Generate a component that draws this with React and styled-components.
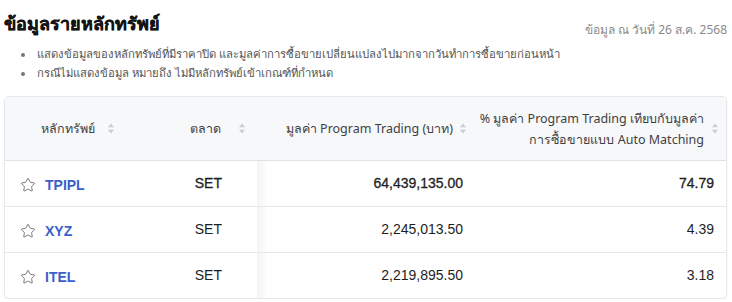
import React from "react";
import styled, { createGlobalStyle } from "styled-components";
import { Star } from "lucide-react";

const GlobalStyle = createGlobalStyle`
  body {
    margin: 0;
    background: #ffffff;
    font-family: "Noto Sans", "Liberation Sans", sans-serif;
    color: #222;
  }
`;

const rows = [
  { symbol: "TPIPL", market: "SET", value: "64,439,135.00", pct: "74.79", bold: true },
  { symbol: "XYZ", market: "SET", value: "2,245,013.50", pct: "4.39" },
  { symbol: "ITEL", market: "SET", value: "2,219,895.50", pct: "3.18" },
];

function SortIcon() {
  return (
    <svg width="6" height="11" viewBox="0 0 6 11">
      <path d="M0 4.3 L3 0.5 L6 4.3 Z" fill="#c9ccd1" />
      <path d="M0 6.7 L3 10.5 L6 6.7 Z" fill="#c9ccd1" />
    </svg>
  );
}

export default function App() {
  return (
    <Page>
      <GlobalStyle />
      <TopBar>
        <Title>ข้อมูลรายหลักทรัพย์</Title>
        <AsOf>ข้อมูล ณ วันที่ 26 ส.ค. 2568</AsOf>
      </TopBar>
      <Notes>
        <li>แสดงข้อมูลของหลักทรัพย์ที่มีราคาปิด และมูลค่าการซื้อขายเปลี่ยนแปลงไปมากจากวันทำการซื้อขายก่อนหน้า</li>
        <li>กรณีไม่แสดงข้อมูล หมายถึง ไม่มีหลักทรัพย์เข้าเกณฑ์ที่กำหนด</li>
      </Notes>
      <TableCard>
        <Table>
          <colgroup>
            <col style={{ width: 120 }} />
            <col style={{ width: 132 }} />
            <col style={{ width: 218 }} />
            <col />
          </colgroup>
          <thead>
            <tr>
              <Th $padLeft={36}>
                <HeadInner $justify="flex-start" $gap={13}>
                  หลักทรัพย์ <SortIcon />
                </HeadInner>
              </Th>
              <Th $sticky $padRight={12}>
                <HeadInner $justify="flex-end" $gap={18}>
                  ตลาด <SortIcon />
                </HeadInner>
              </Th>
              <Th $padRight={9}>
                <HeadInner $justify="flex-end" $gap={7}>
                  มูลค่า Program Trading (บาท) <SortIcon />
                </HeadInner>
              </Th>
              <Th $padRight={8}>
                <HeadInner $justify="flex-end" $gap={8}>
                  <HeadText>
                    % มูลค่า Program Trading เทียบกับมูลค่า
                    <br />
                    การซื้อขายแบบ Auto Matching
                  </HeadText>
                  <SortIcon />
                </HeadInner>
              </Th>
            </tr>
          </thead>
          <tbody>
            {rows.map((r) => (
              <tr key={r.symbol}>
                <Td $padLeft={15}>
                  <SymbolCell>
                    <Star size={16} strokeWidth={1.2} color="#5a5a5a" />
                    <SymbolLink>{r.symbol}</SymbolLink>
                  </SymbolCell>
                </Td>
                <Td $sticky $align="right" $padRight={35} $bold={r.bold}>
                  {r.market}
                </Td>
                <Td $align="right" $padRight={12} $bold={r.bold}>
                  {r.value}
                </Td>
                <Td $align="right" $padRight={12} $bold={r.bold}>
                  {r.pct}
                </Td>
              </tr>
            ))}
          </tbody>
        </Table>
      </TableCard>
    </Page>
  );
}

const Page = styled.div`
  padding: 10px 5px 0 4px;
`;

const TopBar = styled.div`
  display: flex;
  justify-content: space-between;
  align-items: flex-end;
`;

const Title = styled.h1`
  margin: 0;
  font-size: 18px;
  font-weight: 700;
  color: #141414;
  line-height: 26px;
  -webkit-text-stroke: 0.3px currentColor;
`;

const AsOf = styled.span`
  font-size: 12px;
  color: #8a8a8a;
  line-height: 18px;
  position: relative;
  top: 3px;
`;

const Notes = styled.ul`
  margin: 8px 0 0;
  padding-left: 31px;
  font-size: 11.3px;
  line-height: 19px;
  color: #555;
  li {
    padding-left: 2px;
  }
  li::marker {
    color: #777;
    font-size: 10px;
  }
`;

const TableCard = styled.div`
  margin-top: 14px;
  border: 1px solid #e4e7eb;
  border-radius: 5px;
  overflow: hidden;
  box-shadow: 0 2px 3px rgba(0, 0, 0, 0.05);
`;

const Table = styled.table`
  width: 100%;
  border-collapse: collapse;
  table-layout: fixed;
`;

const Th = styled.th`
  position: relative;
  height: 63px;
  background: #f7f8fa;
  border-bottom: 1px solid #dfe2e6;
  font-size: 12.5px;
  font-weight: 400;
  color: #3f3f3f;
  padding: 0 ${(p) => p.$padRight || 0}px 0 ${(p) => p.$padLeft || 0}px;
  ${(p) =>
    p.$sticky &&
    `&::after {
      content: "";
      position: absolute;
      top: 0;
      bottom: 0;
      right: -12px;
      width: 12px;
      background: linear-gradient(to right, rgba(0,0,0,0.05), rgba(0,0,0,0));
      pointer-events: none;
    }`}
`;

const HeadInner = styled.div`
  display: flex;
  align-items: center;
  justify-content: ${(p) => p.$justify};
  gap: ${(p) => p.$gap}px;
  white-space: nowrap;
`;

const HeadText = styled.span`
  text-align: right;
  line-height: 21px;
`;

const Td = styled.td`
  position: relative;
  height: 43px;
  border-bottom: 1px solid #e4e7eb;
  font-family: "Liberation Sans", Arial, sans-serif;
  font-size: 14px;
  font-weight: 400;
  -webkit-text-stroke: ${(p) => (p.$bold ? "0.3px currentColor" : "0")};
  color: #1e1e1e;
  text-align: ${(p) => p.$align || "left"};
  padding: 0 ${(p) => p.$padRight || 0}px 2px ${(p) => p.$padLeft || 0}px;
  tr:last-child & {
    border-bottom: none;
  }
  ${(p) =>
    p.$sticky &&
    `&::after {
      content: "";
      position: absolute;
      top: 0;
      bottom: 0;
      right: -12px;
      width: 12px;
      background: linear-gradient(to right, rgba(0,0,0,0.045), rgba(0,0,0,0));
      pointer-events: none;
    }`}
`;

const SymbolCell = styled.div`
  display: flex;
  align-items: center;
  gap: 9px;
  padding-top: 4px;
  -webkit-text-stroke: 0;
`;

const SymbolLink = styled.a`
  font-family: "Liberation Sans", Arial, sans-serif;
  font-weight: 700;
  font-size: 14px;
  color: #3a5fcd;
  cursor: pointer;
`;
